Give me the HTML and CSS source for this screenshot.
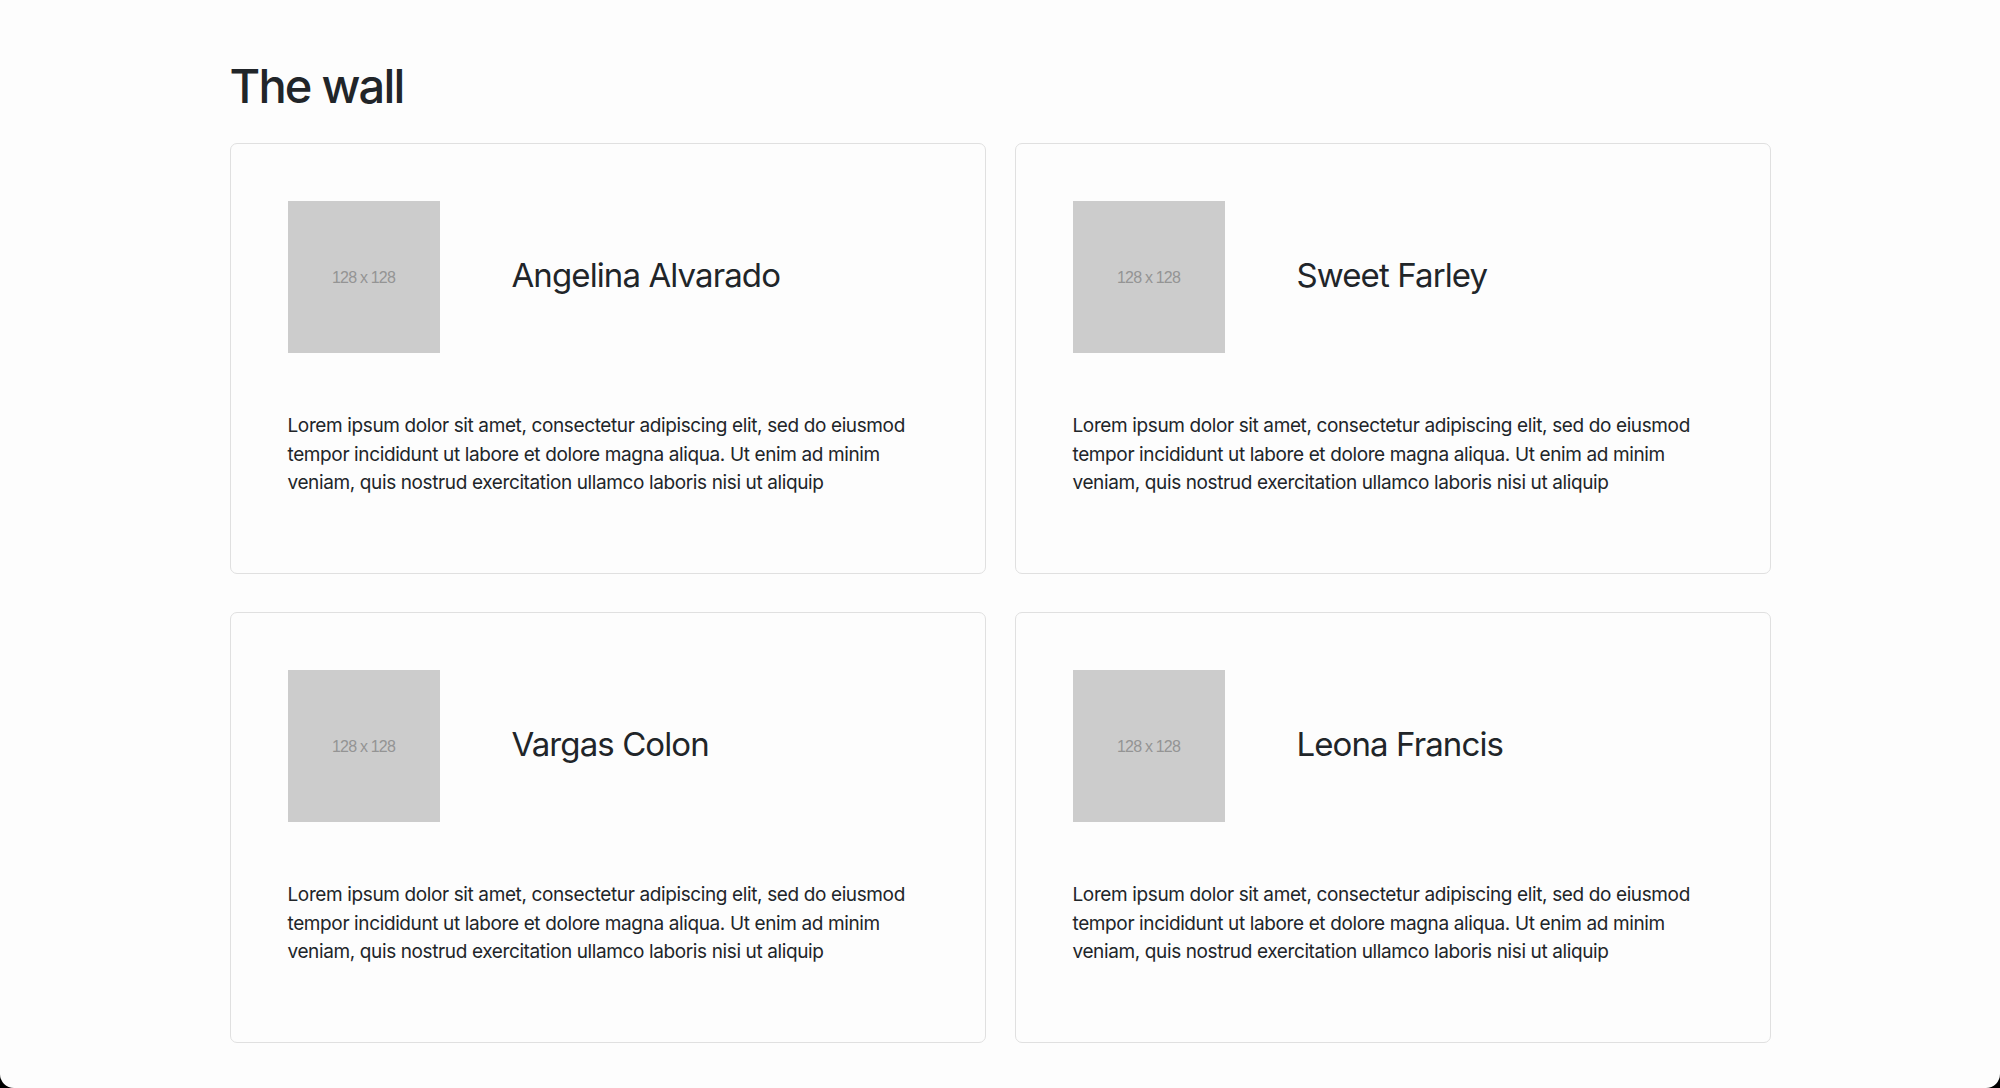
FILE: index.html
```html
<!DOCTYPE html>
<html lang="en">
<head>
<meta charset="utf-8">
<title>The wall</title>
<link rel="stylesheet" href="styles.css">
</head>
<body>
<div class="page">
  <main class="container">
    <h1 class="title">The wall</h1>
    <div class="grid">
      <article class="card">
        <div class="card-head">
          <div class="thumb">128 x 128</div>
          <h2 class="name">Angelina Alvarado</h2>
        </div>
        <p class="text">Lorem ipsum dolor sit amet, consectetur adipiscing elit, sed do eiusmod tempor incididunt ut labore et dolore magna aliqua. Ut enim ad minim veniam, quis nostrud exercitation ullamco laboris nisi ut aliquip</p>
      </article>
      <article class="card">
        <div class="card-head">
          <div class="thumb">128 x 128</div>
          <h2 class="name">Sweet Farley</h2>
        </div>
        <p class="text">Lorem ipsum dolor sit amet, consectetur adipiscing elit, sed do eiusmod tempor incididunt ut labore et dolore magna aliqua. Ut enim ad minim veniam, quis nostrud exercitation ullamco laboris nisi ut aliquip</p>
      </article>
      <article class="card">
        <div class="card-head">
          <div class="thumb">128 x 128</div>
          <h2 class="name">Vargas Colon</h2>
        </div>
        <p class="text">Lorem ipsum dolor sit amet, consectetur adipiscing elit, sed do eiusmod tempor incididunt ut labore et dolore magna aliqua. Ut enim ad minim veniam, quis nostrud exercitation ullamco laboris nisi ut aliquip</p>
      </article>
      <article class="card">
        <div class="card-head">
          <div class="thumb">128 x 128</div>
          <h2 class="name">Leona Francis</h2>
        </div>
        <p class="text">Lorem ipsum dolor sit amet, consectetur adipiscing elit, sed do eiusmod tempor incididunt ut labore et dolore magna aliqua. Ut enim ad minim veniam, quis nostrud exercitation ullamco laboris nisi ut aliquip</p>
      </article>
    </div>
  </main>
</div>
</body>
</html>
```

FILE: styles.css
```css
html {
  background: #000;
}
body {
  margin: 0;
  font-family: Inter, "Noto Sans", "Liberation Sans", sans-serif;
  color: #212529;
}
.page {
  height: 1088px;
  overflow: hidden;
  background: #fdfdfd;
  border-radius: 0 0 14px 14px;
}
.container {
  width: 1541px;
  margin: 0 auto;
  padding-top: 57px;
}
.title {
  margin: 0 0 29px 0;
  font-size: 47px;
  font-weight: 500;
  line-height: 57px;
  letter-spacing: -1.8px;
}
.grid {
  display: grid;
  grid-template-columns: 756px 756px;
  column-gap: 29px;
  row-gap: 38px;
}
.card {
  border: 1px solid #e0e0e0;
  border-radius: 7px;
  background: #fdfdfd;
  padding: 57px;
}
.card-head {
  display: flex;
  align-items: center;
  gap: 72px;
  margin-bottom: 59px;
}
.thumb {
  width: 152px;
  height: 152px;
  flex: none;
  background: #cccccc;
  color: #949494;
  font-family: "Liberation Sans", Arial, sans-serif;
  font-size: 16px;
  letter-spacing: -0.8px;
  display: flex;
  align-items: center;
  justify-content: center;
  padding-top: 2px;
  box-sizing: border-box;
}
.name {
  margin: 0;
  font-size: 33px;
  font-weight: 400;
  line-height: 40px;
  letter-spacing: -0.9px;
  padding-bottom: 5px;
}
.text {
  margin: 0 0 18.5px 0;
  font-size: 19px;
  line-height: 28.5px;
  letter-spacing: -0.38px;
}
```
